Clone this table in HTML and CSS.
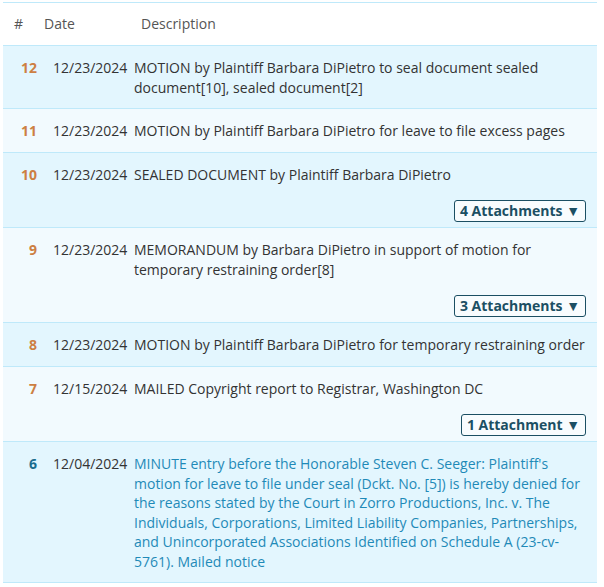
FILE: index.html
```html
<!DOCTYPE html>
<html>
<head>
<meta charset="utf-8">
<link rel="stylesheet" href="styles.css">
</head>
<body>
<div class="docket">
  <div class="head">
    <span class="h-num">#</span>
    <span class="h-date">Date</span>
    <span class="h-desc">Description</span>
  </div>

  <div class="row alt">
    <div class="num">12</div>
    <div class="date">12/23/2024</div>
    <div class="desc">MOTION by Plaintiff Barbara DiPietro to seal document sealed document[10], sealed document[2]</div>
  </div>

  <div class="row">
    <div class="num">11</div>
    <div class="date">12/23/2024</div>
    <div class="desc">MOTION by Plaintiff Barbara DiPietro for leave to file excess pages</div>
  </div>

  <div class="row alt has-attach">
    <div class="num">10</div>
    <div class="date">12/23/2024</div>
    <div class="desc">SEALED DOCUMENT by Plaintiff Barbara DiPietro
      <div class="attach"><button class="attach-btn">4 Attachments ▼</button></div>
    </div>
  </div>

  <div class="row has-attach">
    <div class="num">9</div>
    <div class="date">12/23/2024</div>
    <div class="desc">MEMORANDUM by Barbara DiPietro in support of motion for temporary restraining order[8]
      <div class="attach"><button class="attach-btn">3 Attachments ▼</button></div>
    </div>
  </div>

  <div class="row alt">
    <div class="num">8</div>
    <div class="date">12/23/2024</div>
    <div class="desc">MOTION by Plaintiff Barbara DiPietro for temporary restraining order</div>
  </div>

  <div class="row has-attach">
    <div class="num">7</div>
    <div class="date">12/15/2024</div>
    <div class="desc">MAILED Copyright report to Registrar, Washington DC
      <div class="attach"><button class="attach-btn">1 Attachment ▼</button></div>
    </div>
  </div>

  <div class="row alt minute">
    <div class="num">6</div>
    <div class="date">12/04/2024</div>
    <div class="desc">MINUTE entry before the Honorable Steven C. Seeger: Plaintiff's motion for leave to file under seal (Dckt. No. [5]) is hereby denied for the reasons stated by the Court in Zorro Productions, Inc. v. The Individuals, Corporations, Limited Liability Companies, Partnerships, and Unincorporated Associations Identified on Schedule A (23-cv-5761). Mailed notice</div>
  </div>
</div>
</body>
</html>
```

FILE: styles.css
```css
html, body {
  margin: 0;
  padding: 0;
  background: #ffffff;
}

body {
  padding: 2px 7px 0 3px;
  font-family: "Open Sans", "Noto Sans", sans-serif;
  font-size: 14px;
  line-height: 19.5px;
  color: #333333;
}

.docket {
  border-top: 1px solid #bfe9fa;
  border-bottom: 1px solid #bfe9fa;
}

.head {
  display: flex;
  align-items: center;
  height: 42px;
  color: #555555;
}

.h-num { margin-left: 11px; width: 30px; }
.h-date { width: 97px; }

.row {
  display: grid;
  grid-template-columns: 50px 81px 1fr;
  padding: 12px 11px 11px 0;
  border-top: 1px solid #bfe9fa;
  background: #f2fafe;
}

.row.alt {
  background: #e3f6fe;
}

.row.has-attach {
  padding-bottom: 5px;
}

.num {
  text-align: right;
  padding-right: 16px;
  font-weight: 700;
  color: #cd7f43;
}

.date {
  white-space: nowrap;
}

.desc {
  min-width: 0;
}

.attach {
  display: flex;
  justify-content: flex-end;
  margin-top: 16px;
}

.attach-btn {
  font-family: inherit;
  font-size: 14px;
  font-weight: 700;
  line-height: 18px;
  color: #1b4f63;
  background: #f8fcfe;
  border: 1px solid #1b4f63;
  border-radius: 3px;
  padding: 1px 5px;
  margin: 0;
  cursor: pointer;
}

.row.minute .num {
  color: #1c6d8e;
}

.row.minute .desc {
  color: #1f8ab8;
}
```
